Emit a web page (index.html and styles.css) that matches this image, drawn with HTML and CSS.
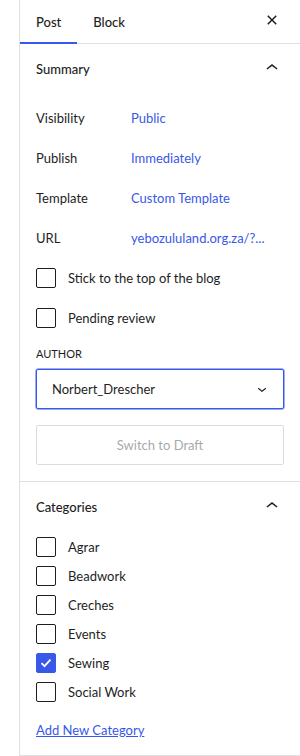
FILE: index.html
```html
<!DOCTYPE html>
<html lang="en">
<head>
    <meta charset="UTF-8">
    <meta name="viewport" content="width=device-width, initial-scale=1.0">
    <title>Post settings</title>
    <link rel="stylesheet" href="styles.css">
</head>
<body>
    <div class="sidebar">
        <div class="tabs">
            <div class="tab active">Post</div>
            <div class="tab">Block</div>
            <button class="icon-btn close">
                <svg width="24" height="24" viewBox="0 0 24 24"><path d="M12 13.06l3.712 3.713 1.061-1.06L13.061 12l3.712-3.712-1.06-1.06L12 10.938 8.288 7.227l-1.061 1.06L10.939 12l-3.712 3.712 1.06 1.061L12 13.061z"/></svg>
            </button>
        </div>

        <div class="panel">
            <div class="panel-head">
                <span>Summary</span>
                <svg width="24" height="24" viewBox="0 0 24 24"><path d="M6.5 12.4L12 8l5.5 4.4-.9 1.2L12 10l-4.6 3.6-1-1.2z"/></svg>
            </div>
            <div class="panel-body">
                <div class="row"><span class="key">Visibility</span><a class="val">Public</a></div>
                <div class="row"><span class="key">Publish</span><a class="val">Immediately</a></div>
                <div class="row"><span class="key">Template</span><a class="val">Custom Template</a></div>
                <div class="row"><span class="key">URL</span><a class="val">yebozululand.org.za/?...</a></div>
                <label class="check-row"><span class="box"></span>Stick to the top of the blog</label>
                <label class="check-row"><span class="box"></span>Pending review</label>
                <div class="field-label">AUTHOR</div>
                <div class="select">
                    <span>Norbert_Drescher</span>
                    <svg width="18" height="18" viewBox="0 0 24 24"><path d="M17.5 11.6L12 16l-5.5-4.4.9-1.2L12 14l4.6-3.6 1 1.2z"/></svg>
                </div>
                <div class="btn-draft">Switch to Draft</div>
            </div>
        </div>

        <div class="panel last">
            <div class="panel-head">
                <span>Categories</span>
                <svg width="24" height="24" viewBox="0 0 24 24"><path d="M6.5 12.4L12 8l5.5 4.4-.9 1.2L12 10l-4.6 3.6-1-1.2z"/></svg>
            </div>
            <div class="cat-list">
                <label class="cat"><span class="box"></span>Agrar</label>
                <label class="cat"><span class="box"></span>Beadwork</label>
                <label class="cat"><span class="box"></span>Creches</label>
                <label class="cat"><span class="box"></span>Events</label>
                <label class="cat"><span class="box checked"><svg width="20" height="20" viewBox="0 0 20 20"><path d="M5.5 10.2l3 3 6-6.6" fill="none" stroke="#fff" stroke-width="1.8"/></svg></span>Sewing</label>
                <label class="cat"><span class="box"></span>Social Work</label>
            </div>
            <a class="add-link">Add New Category</a>
        </div>
    </div>
</body>
</html>
```

FILE: styles.css
```css
body {
    margin: 0;
    padding: 0;
    background: #fff;
    font-family: Lato, "Open Sans", sans-serif;
    font-size: 13px;
    color: #1e1e1e;
}
.sidebar {
    margin-left: 19px;
    height: 755px;
    border-left: 1px solid #e0e0e0;
    border-bottom: 1px solid #e0e0e0;
}
.tabs {
    display: flex;
    align-items: stretch;
    height: 43px;
    border-bottom: 1px solid #e0e0e0;
    padding-right: 16px;
}
.tab {
    display: flex;
    align-items: center;
    padding: 0 16px;
    font-weight: 500;
    margin-bottom: -1px;
}
.tab.active {
    box-shadow: inset 0 -2px 0 #3858e9;
}
.icon-btn {
    margin-left: auto;
    align-self: center;
    width: 24px;
    height: 24px;
    padding: 0;
    border: 0;
    background: none;
    margin-top: -3px;
}
.icon-btn svg, .panel-head svg {
    display: block;
    fill: #1e1e1e;
}
.panel {
    border-bottom: 1px solid #e0e0e0;
    padding: 0 16px 16px;
}
.panel.last {
    border-bottom: 0;
}
.panel-head {
    display: flex;
    align-items: center;
    justify-content: space-between;
    height: 50px;
    font-weight: 500;
}
.panel-head svg {
    margin-top: -2px;
}
.panel-body {
    padding-top: 4px;
}
.row {
    display: flex;
    align-items: center;
    height: 40px;
}
.key {
    width: 95px;
}
.val {
    color: #3858e9;
}
.check-row, .cat {
    display: flex;
    align-items: center;
    gap: 12px;
    height: 40px;
}
.cat {
    height: 29px;
}
.box {
    width: 18px;
    height: 18px;
    border: 1px solid #1e1e1e;
    border-radius: 2px;
    flex-shrink: 0;
}
.box.checked {
    background: #3858e9;
    border-color: #3858e9;
}
.box svg {
    display: block;
    margin: -1px;
}
.field-label {
    font-size: 11px;
    text-transform: uppercase;
    line-height: 16px;
    margin: 8px 0 7px;
}
.select {
    display: flex;
    align-items: center;
    justify-content: space-between;
    height: 38px;
    padding: 0 12px 0 15px;
    border: 1px solid #3858e9;
    box-shadow: 0 0 0 0.5px #3858e9;
    border-radius: 2px;
}
.select svg {
    fill: #1e1e1e;
}
.btn-draft {
    margin-top: 16px;
    height: 38px;
    display: flex;
    align-items: center;
    justify-content: center;
    border: 1px solid #dcdcde;
    border-radius: 2px;
    color: #a7aaad;
}
.cat-list {
    margin-bottom: 10px;
}
.add-link {
    display: inline-block;
    color: #3858e9;
    text-decoration: underline;
    line-height: 20px;
    margin-top: 4px;
}
```
